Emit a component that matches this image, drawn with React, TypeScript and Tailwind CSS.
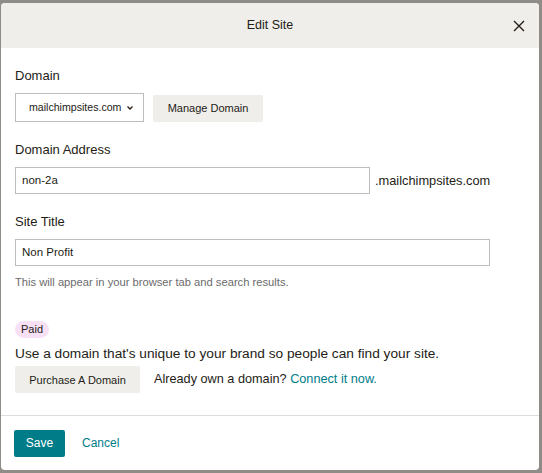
export default function App() {
  return (
    <div className="w-full h-[473px] bg-[#8f8c88] pt-[3px] pl-[1px] pr-[3px] pb-[3px] font-['Liberation_Sans',Arial,sans-serif] text-[#241c15]">
      <div className="h-full bg-white rounded-[4px] overflow-hidden flex flex-col">
        <div className="relative h-[45px] shrink-0 bg-[#efeeea] flex items-center justify-center">
          <span className="text-[12.5px]">Edit Site</span>
          <button className="absolute right-[14px] top-[17px] text-[#241c15]">
            <svg width="12" height="12" viewBox="0 0 12 12" fill="none" stroke="currentColor" strokeWidth="1.4">
              <path d="M1 1L11 11M11 1L1 11" />
            </svg>
          </button>
        </div>

        <div className="flex-1 px-[14px] pt-[18px]">
          <div className="text-[13px] leading-[20px] font-medium">Domain</div>
          <div className="mt-[7px] flex items-start gap-[9px]">
            <div className="w-[129px] h-[29px] border border-[#bdbdbd] flex items-center justify-between pl-[13px] pr-[9px] text-[10.6px]">
              <span>mailchimpsites.com</span>
              <svg width="8" height="6" viewBox="0 0 8 6" fill="none" stroke="currentColor" strokeWidth="1.3">
                <path d="M1.5 1.5L4 4L6.5 1.5" />
              </svg>
            </div>
            <button className="h-[27px] w-[110px] mt-[2px] bg-[#efeeea] rounded-[2px] text-[11px]">Manage Domain</button>
          </div>

          <div className="mt-[18px] text-[13px] leading-[20px] font-medium">Domain Address</div>
          <div className="mt-[7px] flex items-center gap-[5px]">
            <div className="w-[355px] h-[27px] border border-[#bdbdbd] flex items-center pl-[6px] text-[11.5px]">non-2a</div>
            <span className="text-[12.8px]">.mailchimpsites.com</span>
          </div>

          <div className="mt-[18px] text-[13px] leading-[20px] font-medium">Site Title</div>
          <div className="mt-[7px] w-[475px] h-[27px] border border-[#bdbdbd] flex items-center pl-[6px] text-[11.5px]">Non Profit</div>
          <div className="mt-[8px] text-[11.2px] leading-[16px] text-[#6b6b6b]">This will appear in your browser tab and search results.</div>

          <div className="mt-[31px] inline-flex h-[17px] items-center rounded-full bg-[#f8e1f7] px-[6px] text-[11px]">Paid</div>
          <div className="mt-[4px] text-[13.7px] leading-[20px]">Use a domain that's unique to your brand so people can find your site.</div>
          <div className="mt-[2px] flex items-center gap-[14px]">
            <button className="h-[27px] w-[125px] bg-[#efeeea] rounded-[2px] text-[11px]">Purchase A Domain</button>
            <span className="text-[12.7px]">
              Already own a domain? <span className="text-[#007c89]">Connect it now.</span>
            </span>
          </div>
        </div>

        <div className="h-[55px] shrink-0 border-t border-[#dedddb] flex items-center pl-[13px] gap-[17px]">
          <button className="h-[27px] w-[51px] bg-[#007c89] text-white text-[12px] rounded-[2px] font-medium">Save</button>
          <span className="text-[12px] text-[#007c89]">Cancel</span>
        </div>
      </div>
    </div>
  );
}
